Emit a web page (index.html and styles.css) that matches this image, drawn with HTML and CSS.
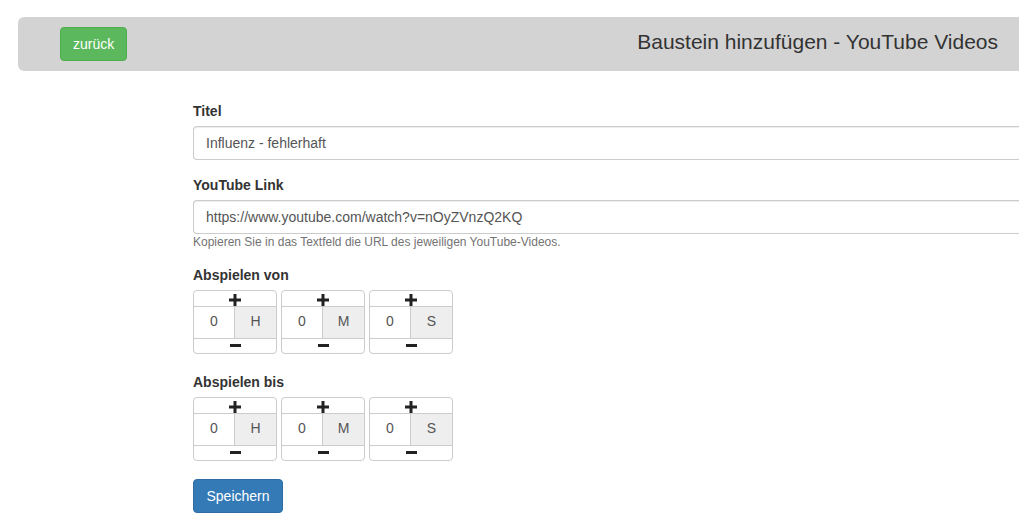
FILE: index.html
```html
<!DOCTYPE html>
<html lang="de">
<head>
<meta charset="utf-8">
<title>Baustein hinzufügen - YouTube Videos</title>
<link rel="stylesheet" href="styles.css">
</head>
<body>
<div class="page">
  <header class="topbar">
    <button class="btn btn-success">zurück</button>
    <h1 class="title">Baustein hinzufügen - YouTube Videos</h1>
  </header>

  <form class="form">
    <div class="group">
      <label class="label">Titel</label>
      <div class="input">Influenz - fehlerhaft</div>
    </div>
    <div class="group">
      <label class="label">YouTube Link</label>
      <div class="input">https://www.youtube.com/watch?v=nOyZVnzQ2KQ</div>
      <p class="help">Kopieren Sie in das Textfeld die URL des jeweiligen YouTube-Videos.</p>
    </div>

    <div class="group time-group">
      <label class="label">Abspielen von</label>
      <div class="time-row">
        <div class="spinner">
          <div class="step"><svg width="12" height="12" viewBox="0 0 12 12"><rect x="4.5" y="0" width="3" height="12" fill="#222"/><rect x="0" y="4.5" width="12" height="3" fill="#222"/></svg></div>
          <div class="field"><span class="val">0</span><span class="unit">H</span></div>
          <div class="step"><svg width="11" height="4" viewBox="0 0 11 4"><rect x="0" y="0" width="11" height="3" fill="#222"/></svg></div>
        </div>
        <div class="spinner">
          <div class="step"><svg width="12" height="12" viewBox="0 0 12 12"><rect x="4.5" y="0" width="3" height="12" fill="#222"/><rect x="0" y="4.5" width="12" height="3" fill="#222"/></svg></div>
          <div class="field"><span class="val">0</span><span class="unit">M</span></div>
          <div class="step"><svg width="11" height="4" viewBox="0 0 11 4"><rect x="0" y="0" width="11" height="3" fill="#222"/></svg></div>
        </div>
        <div class="spinner">
          <div class="step"><svg width="12" height="12" viewBox="0 0 12 12"><rect x="4.5" y="0" width="3" height="12" fill="#222"/><rect x="0" y="4.5" width="12" height="3" fill="#222"/></svg></div>
          <div class="field"><span class="val">0</span><span class="unit">S</span></div>
          <div class="step"><svg width="11" height="4" viewBox="0 0 11 4"><rect x="0" y="0" width="11" height="3" fill="#222"/></svg></div>
        </div>
      </div>
    </div>

    <div class="group time-group">
      <label class="label">Abspielen bis</label>
      <div class="time-row">
        <div class="spinner">
          <div class="step"><svg width="12" height="12" viewBox="0 0 12 12"><rect x="4.5" y="0" width="3" height="12" fill="#222"/><rect x="0" y="4.5" width="12" height="3" fill="#222"/></svg></div>
          <div class="field"><span class="val">0</span><span class="unit">H</span></div>
          <div class="step"><svg width="11" height="4" viewBox="0 0 11 4"><rect x="0" y="0" width="11" height="3" fill="#222"/></svg></div>
        </div>
        <div class="spinner">
          <div class="step"><svg width="12" height="12" viewBox="0 0 12 12"><rect x="4.5" y="0" width="3" height="12" fill="#222"/><rect x="0" y="4.5" width="12" height="3" fill="#222"/></svg></div>
          <div class="field"><span class="val">0</span><span class="unit">M</span></div>
          <div class="step"><svg width="11" height="4" viewBox="0 0 11 4"><rect x="0" y="0" width="11" height="3" fill="#222"/></svg></div>
        </div>
        <div class="spinner">
          <div class="step"><svg width="12" height="12" viewBox="0 0 12 12"><rect x="4.5" y="0" width="3" height="12" fill="#222"/><rect x="0" y="4.5" width="12" height="3" fill="#222"/></svg></div>
          <div class="field"><span class="val">0</span><span class="unit">S</span></div>
          <div class="step"><svg width="11" height="4" viewBox="0 0 11 4"><rect x="0" y="0" width="11" height="3" fill="#222"/></svg></div>
        </div>
      </div>
    </div>

    <button type="button" class="btn btn-primary">Speichern</button>
  </form>
</div>
</body>
</html>
```
FILE: styles.css
```css
html, body {
  margin: 0;
  padding: 0;
  background: #fff;
  overflow: hidden;
}
body {
  font-family: "Liberation Sans", Arial, sans-serif;
  font-size: 14px;
  line-height: 1.42857;
  color: #333;
}
.page {
  padding-top: 17px;
}
.topbar {
  margin-left: 18px;
  height: 54px;
  box-sizing: border-box;
  background: #d3d3d3;
  border-radius: 6px 0 0 6px;
  display: flex;
  align-items: center;
  justify-content: space-between;
  padding: 0 21px 0 42px;
}
.title {
  margin: 0 0 4px 0;
  font-size: 21px;
  font-weight: normal;
  color: #333;
  line-height: 1.1;
}
.btn {
  font-family: inherit;
  font-size: 14px;
  line-height: 20px;
  color: #fff;
  border: 1px solid transparent;
  border-radius: 4px;
  padding: 6px 12px;
  height: 34px;
  box-sizing: border-box;
  cursor: pointer;
}
.btn-success {
  background: #5cb85c;
  border-color: #4cae4c;
}
.btn-primary {
  background: #337ab7;
  border-color: #2e6da4;
  width: 90px;
  padding: 6px 0;
  text-align: center;
}
.form {
  margin: 30px 0 0 193px;
  display: flex;
  flex-direction: column;
  align-items: flex-start;
}
.group {
  width: 100%;
  margin-bottom: 15px;
}
.label {
  display: block;
  font-weight: bold;
  margin-bottom: 5px;
  line-height: 20px;
}
.input {
  height: 34px;
  box-sizing: border-box;
  width: 100%;
  border: 1px solid #ccc;
  border-right: none;
  border-radius: 4px 0 0 4px;
  padding: 6px 12px;
  color: #555;
  line-height: 20px;
  box-shadow: inset 0 1px 1px rgba(0,0,0,.075);
}
.help {
  margin: 0 0 -1px 0;
  font-size: 12px;
  line-height: 17px;
  color: #737373;
}
.time-group {
  margin-bottom: 18px;
}
.time-group + .time-group {
  margin-bottom: 18px;
}
.time-row {
  display: flex;
  gap: 4px;
}
.spinner {
  width: 84px;
  height: 64px;
  box-sizing: border-box;
  border: 1px solid #ccc;
  border-radius: 4px;
  display: flex;
  flex-direction: column;
}
.step {
  height: 15px;
  display: flex;
  align-items: center;
  justify-content: center;
}
.step:first-child {
  align-items: flex-end;
  padding-top: 1px;
  box-sizing: border-box;
}
.field {
  height: 32px;
  border-top: 1px solid #ccc;
  border-bottom: 1px solid #ccc;
  display: flex;
}
.val {
  width: 40px;
  border-right: 1px solid #ccc;
  display: flex;
  align-items: center;
  justify-content: center;
  color: #555;
}
.unit {
  flex: 1;
  background: #eee;
  display: flex;
  align-items: center;
  justify-content: center;
  color: #555;
}
```
